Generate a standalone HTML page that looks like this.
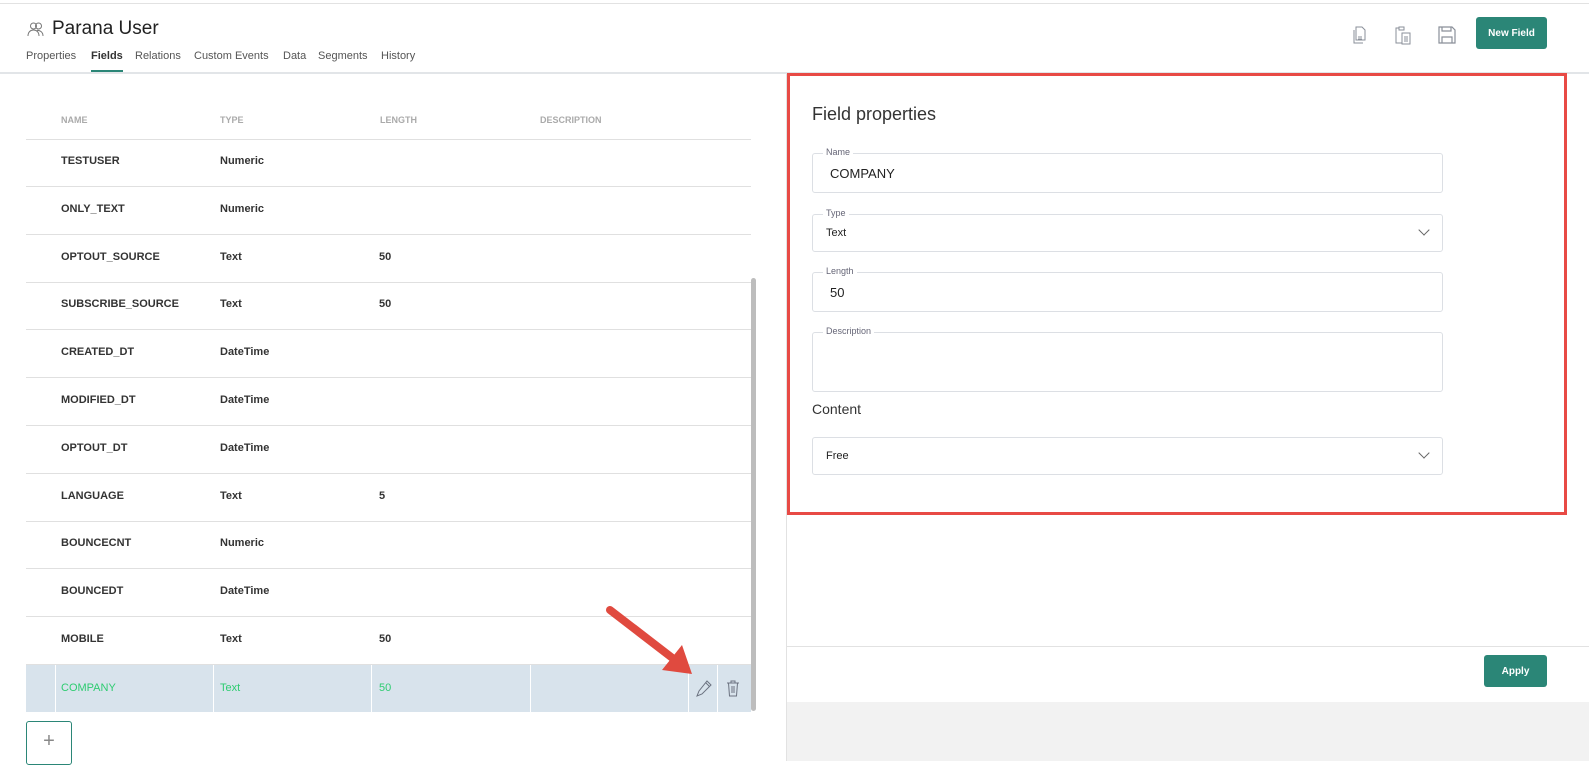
<!DOCTYPE html>
<html><head><meta charset="utf-8"><style>
*{box-sizing:border-box;margin:0;padding:0}
body{width:1589px;height:761px;overflow:hidden;background:#fff;font-family:"Liberation Sans",sans-serif;color:#333;position:relative}
.a{position:absolute}
.tab{position:absolute;top:50px;font-size:11px;color:#555}
.hd{position:absolute;top:115px;font-size:9px;font-weight:bold;color:#aaa}
.cell{position:absolute;font-size:11px;font-weight:bold;color:#333}
.hl{position:absolute;left:26px;width:725px;height:1px;background:#e0e0e0}
.box{position:absolute;left:812px;width:631px;border:1px solid #dcdfe4;border-radius:3px;background:#fff}
.lbl{position:absolute;top:-7px;left:10px;background:#fff;padding:0 3px;font-size:9px;color:#667}
.val{position:absolute;font-size:13px;color:#222}
.chev{position:absolute;right:14px;width:8px;height:8px;border-right:1.2px solid #666;border-bottom:1.2px solid #666;transform:rotate(45deg)}
.btn{position:absolute;background:#2b8677;color:#fff;font-weight:bold;font-size:10px;border-radius:3px;display:flex;align-items:center;justify-content:center}
</style></head><body>
<div class="a" style="left:0;top:3px;width:1589px;height:1px;background:#e2e2e2"></div>
<svg class="a" style="left:27px;top:21px" width="18" height="16" viewBox="0 0 18 16" fill="none" stroke="#777" stroke-width="1"><circle cx="6.5" cy="5" r="3"/><circle cx="11.5" cy="5" r="3"/><path d="M1 15c0-4 2.5-6 5.5-6s5.5 2 5.5 6M10 9.2c3 0 6 1.8 6 5.8"/></svg>
<div class="a" style="left:52px;top:18px;font-size:19px;color:#222">Parana User</div>
<div class="tab" style="left:26px">Properties</div>
<div class="tab" style="left:91px;font-weight:bold;color:#333">Fields</div>
<div class="a" style="left:91px;top:70px;width:32px;height:3px;background:#2b8677"></div>
<div class="tab" style="left:135px">Relations</div>
<div class="tab" style="left:194px">Custom Events</div>
<div class="tab" style="left:283px">Data</div>
<div class="tab" style="left:318px">Segments</div>
<div class="tab" style="left:381px">History</div>
<div class="a" style="left:0;top:72px;width:1589px;height:2px;background:#e2e5e8"></div>
<svg class="a" style="left:1352px;top:26px" width="14" height="18" viewBox="0 0 14 18" fill="none" stroke="#8a8f99" stroke-width="1"><path d="M4 1h6l3 3v10H4z"/><path d="M2 4v13h9"/><path d="M6 11h4M6 13h4"/></svg>
<svg class="a" style="left:1394px;top:25px" width="18" height="20" viewBox="0 0 18 20" fill="none" stroke="#8a8f99" stroke-width="1"><path d="M5 3H2v15h6"/><path d="M5 2h5v3H5z"/><path d="M8 8h8v11H8z"/><path d="M10 12h4M10 14h4M10 16h4"/></svg>
<svg class="a" style="left:1438px;top:26px" width="18" height="18" viewBox="0 0 18 18" fill="none" stroke="#8a8f99" stroke-width="1.2"><path d="M1 1h13l3 3v13H1z"/><path d="M4 1v4h9V1M4 17v-6h10v6"/></svg>
<div class="btn" style="left:1476px;top:17px;width:71px;height:32px">New Field</div>

<div class="a" style="left:786px;top:74px;width:1px;height:687px;background:#e2e2e2"></div>
<div class="hd" style="left:61px">NAME</div><div class="hd" style="left:220px">TYPE</div><div class="hd" style="left:380px">LENGTH</div><div class="hd" style="left:540px">DESCRIPTION</div>
<div class="hl" style="top:139px"></div>
<div class="a" style="left:26px;top:664px;width:725px;height:48px;background:#d8e3ec"></div>
<div class="a" style="left:55px;top:664px;width:1px;height:48px;background:#fff"></div>
<div class="a" style="left:213px;top:664px;width:1px;height:48px;background:#fff"></div>
<div class="a" style="left:371px;top:664px;width:1px;height:48px;background:#fff"></div>
<div class="a" style="left:530px;top:664px;width:1px;height:48px;background:#fff"></div>
<div class="a" style="left:688px;top:664px;width:1px;height:48px;background:#fff"></div>
<div class="a" style="left:717px;top:664px;width:1px;height:48px;background:#fff"></div>
<div id="rows"></div>
<script>
var d=[["TESTUSER","Numeric",""],["ONLY_TEXT","Numeric",""],["OPTOUT_SOURCE","Text","50"],["SUBSCRIBE_SOURCE","Text","50"],["CREATED_DT","DateTime",""],["MODIFIED_DT","DateTime",""],["OPTOUT_DT","DateTime",""],["LANGUAGE","Text","5"],["BOUNCECNT","Numeric",""],["BOUNCEDT","DateTime",""],["MOBILE","Text","50"]];
var h="";d.forEach(function(r,i){var t=155+i*47.8;h+='<div class="cell" style="left:61px;top:'+t+'px">'+r[0]+'</div><div class="cell" style="left:220px;top:'+t+'px">'+r[1]+'</div><div class="cell" style="left:379px;top:'+t+'px">'+r[2]+'</div><div class="hl" style="top:'+(t+31)+'px"></div>';});
document.getElementById("rows").innerHTML=h;
</script>
<div class="cell" style="left:61px;top:682px;font-weight:normal;color:#2ecc71">COMPANY</div>
<div class="cell" style="left:220px;top:682px;font-weight:normal;color:#2ecc71">Text</div>
<div class="cell" style="left:379px;top:682px;font-weight:normal;color:#2ecc71">50</div>
<svg class="a" style="left:695px;top:679px" width="18" height="18" viewBox="0 0 18 18" fill="none" stroke="#6b7280" stroke-width="1"><path d="M12 2l4 4-9 9-5 2 2-5z"/><path d="M10.5 3.5l4 4"/></svg>
<svg class="a" style="left:725px;top:679px" width="16" height="18" viewBox="0 0 16 18" fill="none" stroke="#6b7280" stroke-width="1"><path d="M2 4h12M6 4V2h4v2M3.5 4l1 13h7l1-13M7 7v7M9 7v7"/></svg>
<div class="a" style="left:751px;top:278px;width:5px;height:433px;background:#bdbdbd;border-radius:3px"></div>
<div class="a" style="left:26px;top:721px;width:46px;height:44px;border:1px solid #2b8677;border-radius:3px;font-size:20px;color:#888;text-align:center;line-height:38px">+</div>
<svg class="a" style="left:600px;top:600px" width="100" height="80" viewBox="0 0 100 80"><path d="M10 10L75 60" stroke="#e04a3f" stroke-width="8" stroke-linecap="round"/><path d="M62 70L92 74L82 45z" fill="#e04a3f"/></svg>

<div class="a" style="left:787px;top:73px;width:780px;height:442px;border:3px solid #e84a45"></div>
<div class="a" style="left:812px;top:104px;font-size:18px;color:#333">Field properties</div>
<div class="box" style="top:153px;height:40px"><div class="lbl">Name</div><div class="val" style="left:17px;top:12px">COMPANY</div></div>
<div class="box" style="top:214px;height:38px"><div class="lbl">Type</div><div class="val" style="left:13px;top:12px;font-size:11px">Text</div><div class="chev" style="top:11px"></div></div>
<div class="box" style="top:272px;height:40px"><div class="lbl">Length</div><div class="val" style="left:17px;top:12px">50</div></div>
<div class="box" style="top:332px;height:60px"><div class="lbl">Description</div></div>
<div class="a" style="left:812px;top:401px;font-size:14px;color:#333">Content</div>
<div class="box" style="top:437px;height:38px"><div class="val" style="left:13px;top:12px;font-size:11px">Free</div><div class="chev" style="top:11px"></div></div>
<div class="a" style="left:787px;top:646px;width:802px;height:1px;background:#e2e2e2"></div>
<div class="btn" style="left:1484px;top:655px;width:63px;height:32px">Apply</div>
<div class="a" style="left:787px;top:702px;width:802px;height:59px;background:#f2f2f2"></div>
</body></html>
